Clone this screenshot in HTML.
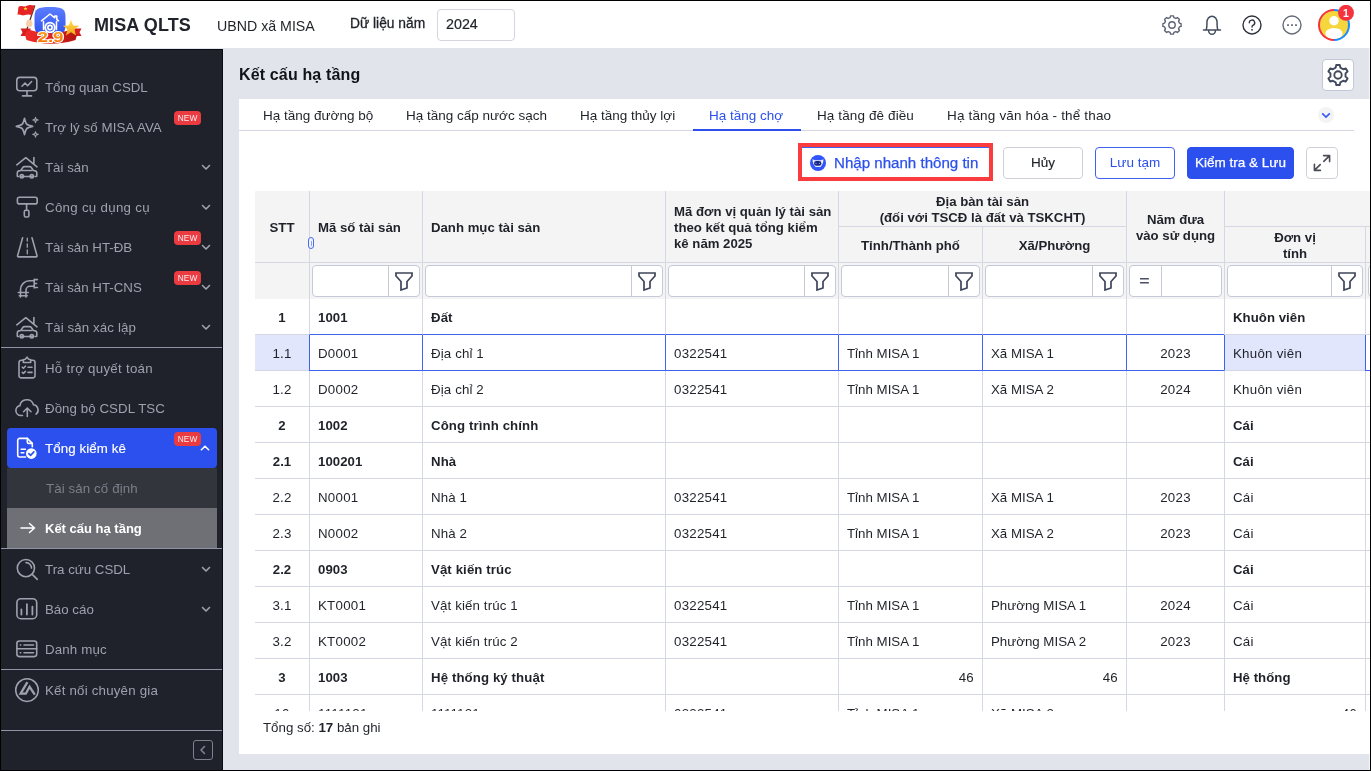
<!DOCTYPE html>
<html lang="vi">
<head>
<meta charset="utf-8">
<title>MISA QLTS - Kết cấu hạ tầng</title>
<style>
*{box-sizing:border-box;margin:0;padding:0}
html,body{width:1371px;height:771px;overflow:hidden;background:#000}
body{font-family:"Liberation Sans",sans-serif;font-size:14px;color:#1f2229;position:relative}
#app{will-change:transform;position:absolute;left:1px;top:1px;width:1369px;height:769px;background:#e1e4ea;overflow:hidden}
/* header */
#hdr{position:absolute;left:0;top:0;width:1369px;height:47px;background:#fff}
#hdr .abs{position:absolute;white-space:nowrap}
#brand{left:93px;top:11px;font-size:18px;font-weight:700;color:#20232b;letter-spacing:.1px;line-height:26px}
#org{left:216px;top:14px;font-size:14.2px;line-height:22px;color:#1f2229}
#ylab{left:349px;top:12px;font-size:13.8px;line-height:22px;color:#1f2229;-webkit-text-stroke:.3px #1f2229}
#year{left:436px;top:8px;width:78px;height:32px;border:1px solid #d3d6de;border-radius:4px;padding-left:8px;line-height:29px;font-size:14.3px;-webkit-text-stroke:.2px #1f2229}
/* sidebar */
#side{position:absolute;left:0;top:48px;width:222px;height:721px;background:#1f222b;border-top:1px solid #090a12;border-right:1px solid #090a12}
.mi{position:absolute;left:6px;width:210px;height:40px;color:#9ea2ae;font-size:13.3px;line-height:40px;white-space:nowrap}
.mi .tx{position:absolute;left:38px;top:1px}
.mi svg.ic{position:absolute;left:8px;top:8px;width:24px;height:24px;overflow:visible;fill:none;stroke:#9ea2ae;stroke-width:1.6;stroke-linecap:round;stroke-linejoin:round}
.mi svg.ch{position:absolute;left:194px;top:15px;width:10px;height:10px;fill:none;stroke:#9ea2ae;stroke-width:1.6;stroke-linecap:round;stroke-linejoin:round}
.new{position:absolute;left:167px;top:4px;width:27px;height:14px;border-radius:4px;background:#ea3b41;color:rgba(255,255,255,.92);font-size:8.3px;line-height:14px;text-align:center;letter-spacing:.1px}
.sep{position:absolute;left:0;width:221px;height:1px;background:#8f93a3}
.mi.act{background:#2b50ed;border-radius:4px;color:#fff}
.mi.act svg.ic,.mi.act svg.ch{stroke:#fff}
.sub{position:absolute;left:6px;width:210px;height:40px;line-height:40px;font-size:13.3px;white-space:nowrap}
/* main */
#title{position:absolute;left:238px;top:62px;font-size:16px;font-weight:700;line-height:24px;color:#111318;letter-spacing:.15px}
#cfg{position:absolute;left:1321px;top:58px;width:32px;height:32px;background:#fff;border:1px solid #c3c8d6;border-radius:4px}
#card{position:absolute;left:238px;top:98px;width:1131px;height:655px;background:#fff}

/* tabs */
#tabs{position:absolute;left:0;top:0;width:1115px;height:32px;border-bottom:1px solid #d5d8e3}
#tabs .tab{position:absolute;top:0;height:32px;line-height:33px;font-size:13.5px;color:#1f2229;white-space:nowrap;padding:0 16px}
#tabs .tab.on{color:#2b50ed;border-bottom:2px solid #2b50ed}
#more{position:absolute;left:1079px;top:8px;width:16px;height:16px;border-radius:8px;background:#f3f3f5}
/* toolbar */
.btn{position:absolute;top:48px;height:32px;border:1px solid #cfd2da;border-radius:4px;background:#fff;font-size:13.5px;line-height:30px;text-align:center;white-space:nowrap;color:#1f2229}
/* grid */
#grid{position:absolute;left:16px;top:92px;width:1115px;height:520px;overflow:hidden}
#grid table{border-collapse:separate;border-spacing:0;table-layout:fixed;width:1210px;font-size:13.3px}
#grid th,#grid td{border-left:1px solid #d5d8e3;border-bottom:1px solid #d5d8e3;overflow:hidden;white-space:nowrap;padding:0 0 0 8px;text-align:left}
#grid tr.h1 th:first-child,#grid td:first-child{border-left:0;text-align:center;padding-left:0;padding-right:0}
#grid thead th{background:#f4f4f5;font-weight:700;font-size:13.2px;line-height:16px;color:#1f2229;vertical-align:middle;white-space:normal;padding-top:3px}
#grid thead th.c{text-align:center;padding:3px 0 0 0}
#grid tr.h1 th{height:36px}
#grid tr.h2 th{height:36px}
#grid tr.f td{height:36px;background:#f4f4f5;padding:0;position:relative;border-bottom:0}
#grid tbody td{height:36px;color:#1f2229;background:#fff;padding-top:1px;letter-spacing:.25px}
#grid tr.g td{font-weight:700;font-size:13.2px;letter-spacing:.05px}
#grid td.n{text-align:center;padding:1px 0 0 0}
#grid td.r{text-align:right;padding:1px 8px 0 0}
.fb{position:absolute;left:2px;top:2px;right:2px;height:32px;border:1px solid #c6cad8;border-radius:4px;background:#fff}
.fb i{position:absolute;top:0;bottom:0;width:1px;background:#c6cad8}
.fb svg{position:absolute;top:5px;width:20px;height:20px;fill:none;stroke:#3f4559;stroke-width:1.7;stroke-linejoin:miter}
#grid tr.sel td{border-left-color:#3f61f0;border-bottom-color:#3f61f0}
#grid tr.pre td.b{border-bottom-color:#3f61f0}
#grid tbody td:nth-child(5),#grid tbody td:nth-child(6){letter-spacing:0}
#grid tbody td:nth-child(3){letter-spacing:.12px}
#grid tr.sel td.hl{background:#e2e6fc;border-bottom-color:#d5d8e3}
#foot{position:absolute;left:24px;top:620px;font-size:13.3px;line-height:18px;color:#1f2229;white-space:nowrap}
</style>
</head>
<body>
<svg width="0" height="0" style="position:absolute"><defs>
<g id="i-car"><path d="M1.8 9.8 10.8 2.7l11.2 9.1M18.9 2.6v5.9"/><g transform="translate(-.2 1.5)"><path d="M2.5 19.5v-3.2c0-1 .6-1.7 1.5-1.9l2-.4 2-3c.4-.6 1-.9 1.7-.9h5.1c.7 0 1.3.3 1.7.9l2 3 2 .4c.9.2 1.5.9 1.5 1.9v3.2c0 .3-.2.5-.5.5h-1.2M6 20h12M3.7 20h-.7c-.3 0-.5-.2-.5-.5"/><circle cx="7" cy="19.8" r="1.7"/><circle cx="17" cy="19.8" r="1.7"/><path d="M7 14h10"/></g></g>
</defs></svg>
<div id="app">
  <div id="hdr">
    <svg class="abs" viewBox="1 1 99 46" style="left:0;top:0;width:99px;height:46px"><defs><linearGradient id="lg1" x1="0" y1="0" x2="0" y2="1"><stop offset="0" stop-color="#5c7dff"/><stop offset="1" stop-color="#2d52ee"/></linearGradient><linearGradient id="lg2" x1="0" y1="0" x2="0" y2="1"><stop offset="0" stop-color="#ffdf4d"/><stop offset="1" stop-color="#f5a21a"/></linearGradient><linearGradient id="lg3" x1="0" y1="0" x2="1" y2="0"><stop offset="0" stop-color="#ef2b2b"/><stop offset=".5" stop-color="#e0201f"/><stop offset="1" stop-color="#b01512"/></linearGradient><linearGradient id="lg4" x1="0" y1="0" x2="0" y2="1"><stop offset="0" stop-color="#ffa51f"/><stop offset="1" stop-color="#f56a00"/></linearGradient></defs>
      <path d="M20.5 28.5h10v7.5h-10l2-3.7zM81.5 28.5h-9v7.5h9l-2-3.7z" fill="#d81f1f"/>
      <path d="M34.5 17c0-8 3-10 15.5-10s15.5 2 15.5 10v8c0 8-3 11-15.5 11s-15.5-3-15.5-11z" fill="url(#lg1)"/>
      <path d="M41.5 20.8 50 14l4.8 3.8v-1.8h2v3.4l1.7 1.4M43.5 21.5v8M56.5 21.5v8" fill="none" stroke="#fff" stroke-width="1.5" stroke-linejoin="round" stroke-linecap="round"/>
      <circle cx="50" cy="27.5" r="5.8" fill="#fff"/><circle cx="50" cy="27.5" r="3.6" fill="none" stroke="#3a5cf0" stroke-width=".9"/><circle cx="50" cy="27.5" r="1.2" fill="#3a5cf0"/>
      <path d="M34.8 5.5 27 29" stroke="#5a2a1c" stroke-width="1.2"/>
      <path d="M18.5 7c3-2.5 5 .5 8-1s5-1 8-.5l-3 9.5c-3-1-5-.5-7.5.3s-4-2-6.5-.3z" fill="#e52424"/>
      <path d="M25.5 6.4 L26.0 7.9 L27.6 7.9 L26.4 8.9 L26.8 10.4 L25.5 9.5 L24.2 10.4 L24.6 8.9 L23.4 7.9 L25.0 7.9Z" fill="#ffd93b"/>
      <ellipse cx="29.3" cy="23.5" rx="3.2" ry="3.8" fill="#f7cfa8"/>
      <path d="M25 35c1-4 3-5.5 7-4.5 12 3.5 24 3.5 36 0 4-1 8 .5 9 4.5l-1.5 5c-17 5-32 5-49 0z" fill="url(#lg3)"/>
      <path d="M71.0 19.9 L73.2 25.5 L79.2 25.8 L74.5 29.6 L76.1 35.5 L71.0 32.2 L65.9 35.5 L67.5 29.6 L62.8 25.8 L68.8 25.5Z" fill="url(#lg2)"/>
      <text transform="translate(50.5 42.3) scale(1.3 1)" x="0" y="0" text-anchor="middle" font-family="Liberation Sans, sans-serif" font-weight="700" font-size="14.5" fill="url(#lg4)" stroke="#fff" stroke-width="2" paint-order="stroke" stroke-linejoin="round">2.9</text>
    </svg>
    <div class="abs" id="brand">MISA QLTS</div>
    <div class="abs" id="org">UBND xã MISA</div>
    <div class="abs" id="ylab">Dữ liệu năm</div>
    <div class="abs" id="year">2024</div>
    <svg class="abs" viewBox="0 0 24 24" style="left:1159px;top:12px;width:24px;height:24px;fill:none;stroke:#5d6373;stroke-width:1.4;stroke-linejoin:round"><path d="M10.56 2.91 L13.44 2.91 L13.90 4.64 L15.86 5.45 L17.41 4.56 L19.44 6.59 L18.55 8.14 L19.36 10.10 L21.09 10.56 L21.09 13.44 L19.36 13.90 L18.55 15.86 L19.44 17.41 L17.41 19.44 L15.86 18.55 L13.90 19.36 L13.44 21.09 L10.56 21.09 L10.10 19.36 L8.14 18.55 L6.59 19.44 L4.56 17.41 L5.45 15.86 L4.64 13.90 L2.91 13.44 L2.91 10.56 L4.64 10.10 L5.45 8.14 L4.56 6.59 L6.59 4.56 L8.14 5.45 L10.10 4.64Z"/><circle cx="12" cy="12" r="3.2"/></svg>
    <svg class="abs" viewBox="0 0 24 24" style="left:1199px;top:12px;width:24px;height:24px;fill:none;stroke:#434c5e;stroke-width:1.5;stroke-linejoin:round;stroke-linecap:round"><path d="M3.5 17h17M6 17c.6-1.2.9-2.8.9-5V9.5a5.1 6.3 0 0 1 10.2 0V12c0 2.2.3 3.8.9 5M8.6 17.4a3.4 3.9 0 0 0 6.8 0"/></svg>
    <svg class="abs" viewBox="0 0 24 24" style="left:1239px;top:12px;width:24px;height:24px;fill:none;stroke:#2e323c;stroke-width:1.4;stroke-linecap:round"><circle cx="12" cy="12" r="9"/><path d="M9.3 9.7a2.7 2.7 0 1 1 4 2.4c-.9.5-1.3 1-1.3 2"/><circle cx="12" cy="16.8" r=".9" fill="#2e323c" stroke="none"/></svg>
    <svg class="abs" viewBox="0 0 24 24" style="left:1279px;top:12px;width:24px;height:24px;fill:none;stroke:#666c7a;stroke-width:1.4"><circle cx="12" cy="12" r="9"/><g fill="#666c7a" stroke="none"><rect x="7.1" y="11.2" width="1.8" height="1.8"/><rect x="11.1" y="11.2" width="1.8" height="1.8"/><rect x="15.1" y="11.2" width="1.8" height="1.8"/></g></svg>
    <svg class="abs" viewBox="0 0 40 40" style="left:1313px;top:4px;width:40px;height:40px"><defs><clipPath id="avc"><circle cx="20" cy="20" r="14"/></clipPath></defs><path d="M20 4a16 16 0 0 0 0 32z" fill="#f5333f"/><path d="M20 4a16 16 0 0 1 0 32z" fill="#1a8cff"/><circle cx="20" cy="20" r="14" fill="#f5d63d"/><g clip-path="url(#avc)" fill="#fff"><circle cx="20" cy="15.7" r="4.7"/><ellipse cx="20" cy="28.5" rx="8.6" ry="5.6"/></g><circle cx="32" cy="7.8" r="8" fill="#f5333f"/><text x="32" y="11.6" text-anchor="middle" font-family="Liberation Sans, sans-serif" font-weight="700" font-size="10.5" fill="#fff">1</text></svg>
  </div>
  <div id="side">
    <div class="mi" style="top:17px"><svg class="ic" viewBox="0 0 24 24"><rect x="1.8" y="2.4" width="20" height="13.4" rx="3"/><path d="M7.5 20.9h9M12 15.8v5.1M7 11.2l3-3.2 2.6 2.7 4-4.2"/></svg><span class="tx">Tổng quan CSDL</span></div>
    <div class="mi" style="top:57px"><svg class="ic" viewBox="0 0 24 24"><path d="M9.5 3.2C10.98 9.63 11.27 9.92 17.7 11.4C11.27 12.88 10.98 13.17 9.5 19.6C8.02 13.17 7.73 12.88 1.3 11.4C7.73 9.92 8.02 9.63 9.5 3.2z"/><path d="M20.5 2.3C20.99 4.42 21.08 4.51 23.2 5C21.08 5.49 20.99 5.58 20.5 7.7C20.01 5.58 19.92 5.49 17.8 5C19.92 4.51 20.01 4.42 20.5 2.3zM20.5 16.7C20.99 18.82 21.08 18.91 23.2 19.4C21.08 19.89 20.99 19.98 20.5 22.1C20.01 19.98 19.92 19.89 17.8 19.4C19.92 18.91 20.01 18.82 20.5 16.7z" stroke-width="1.1"/></svg><span class="tx" style="letter-spacing:0.11px">Trợ lý số MISA AVA</span><span class="new">NEW</span></div>
    <div class="mi" style="top:97px"><svg class="ic" viewBox="0 0 24 24"><use href="#i-car"/></svg><span class="tx">Tài sản</span><svg class="ch" viewBox="0 0 10 10"><path d="M1.5 3.5 5 7l3.5-3.5"/></svg></div>
    <div class="mi" style="top:137px"><svg class="ic" viewBox="0 0 24 24"><rect x="2.4" y="2.2" width="19.8" height="6.7" rx="2"/><path d="M11.6 8.9v6.4"/><rect x="9.3" y="15.3" width="4.6" height="6.7" rx="1.5"/></svg><span class="tx" style="letter-spacing:0.29px">Công cụ dụng cụ</span><svg class="ch" viewBox="0 0 10 10"><path d="M1.5 3.5 5 7l3.5-3.5"/></svg></div>
    <div class="mi" style="top:177px"><svg class="ic" viewBox="0 0 24 24"><path d="M7.6 2.7 2.6 20.6c-.2.7.2 1.3.9 1.3h17.6c.7 0 1.1-.6.9-1.3L17 2.7"/><path d="M12.3 3.2v2.8M12.3 8.8v3.4M12.3 15v3.8" stroke-width="1.3"/></svg><span class="tx">Tài sản HT-ĐB</span><span class="new">NEW</span><svg class="ch" viewBox="0 0 10 10"><path d="M1.5 3.5 5 7l3.5-3.5"/></svg></div>
    <div class="mi" style="top:217px"><svg class="ic" viewBox="0 0 24 24"><path d="M5.5 17.5v-2.7a9 9 0 0 1 9-9h4.6M11 17.5v-2.2a4 4 0 0 1 4-4h4.1M19.2 4.2v8.7M19.2 4.6h3.2M19.2 12.5h3.2M19.2 8.5h2.4M3.3 17.5h9.9M5.5 17.5v4.6M11 17.5v4.6M4.3 20.8h8"/></svg><span class="tx">Tài sản HT-CNS</span><span class="new">NEW</span><svg class="ch" viewBox="0 0 10 10"><path d="M1.5 3.5 5 7l3.5-3.5"/></svg></div>
    <div class="mi" style="top:257px"><svg class="ic" viewBox="0 0 24 24"><use href="#i-car"/></svg><span class="tx" style="letter-spacing:0.1px">Tài sản xác lập</span><svg class="ch" viewBox="0 0 10 10"><path d="M1.5 3.5 5 7l3.5-3.5"/></svg></div>
    <div class="sep" style="top:297px"></div>
    <div class="mi" style="top:298px"><svg class="ic" viewBox="0 0 24 24"><path d="M8.3 4.2H6.2A2.2 2.2 0 0 0 4 6.4v13.3a2.2 2.2 0 0 0 2.2 2.2h11.6a2.2 2.2 0 0 0 2.2-2.2V6.4a2.2 2.2 0 0 0-2.2-2.2h-2.1"/><path d="M8.3 6.5V3.8l2-.6L12 1.2l1.7 2 2 .6v2.7z"/><path d="M7.3 11.2l1.1 1.1 2-2.1M13 11.2h4M7.3 16.4l1.1 1.1 2-2.1M13 16.4h4"/></svg><span class="tx" style="letter-spacing:0.27px">Hỗ trợ quyết toán</span></div>
    <div class="mi" style="top:338px"><svg class="ic" viewBox="0 0 24 24"><path d="M7.5 19.5H5.8a5 5 0 0 1-.9-9.9 7 7 0 0 1 13.6-.8 5.3 5.3 0 0 1 2.6 9.4"/><path d="M12.3 20.5v-8.3M8.6 15.7l3.7-3.7 3.7 3.7"/></svg><span class="tx" style="letter-spacing:0.06px">Đồng bộ CSDL TSC</span></div>
    <div class="mi act" style="top:378px"><svg class="ic" viewBox="0 0 24 24"><path d="M10.5 21H4.7a2 2 0 0 1-2-2V4.4a2 2 0 0 1 2-2h7.6l5 5v3.4"/><path d="M12.3 2.4v3.6a1.4 1.4 0 0 0 1.4 1.4h3.6M6.2 13.3h4.2M6.2 16.8h2.6"/><circle cx="16.3" cy="17.6" r="5.3" fill="#fff" stroke="none"/><path d="M13.8 17.6l1.8 1.8 3.3-3.5" stroke="#2b50ed" stroke-width="1.6"/></svg><span class="tx" style="letter-spacing:.1px;-webkit-text-stroke:.15px #fff">Tổng kiểm kê</span><span class="new">NEW</span><svg class="ch" viewBox="0 0 10 10" style="left:193px;top:15px"><path d="M1.4 6.7 5 3.2l3.6 3.5" stroke-width="1.6"/></svg></div>
    <div class="sub" style="top:418px;background:#33353d;color:#7c7f8a"><span style="position:absolute;left:39px;top:1px;letter-spacing:.1px">Tài sản cố định</span></div>
    <div class="sub" style="top:458px;background:#6e7076;color:#fff;font-weight:700"><svg viewBox="0 0 16 12" style="position:absolute;left:13px;top:14px;width:16px;height:12px;fill:none;stroke:#fff;stroke-width:1.5;stroke-linecap:round;stroke-linejoin:round"><path d="M1 6h13.5M9.5 1.5 14.5 6l-5 4.5"/></svg><span style="position:absolute;left:38px;top:1px;font-size:13px">Kết cấu hạ tầng</span></div>
    <div class="sep" style="top:498px"></div>
    <div class="mi" style="top:499px"><svg class="ic" viewBox="0 0 24 24"><circle cx="10.9" cy="11.1" r="8.6"/><path d="M17.2 17.4l5.1 4.9M11 5.6a5.5 5.5 0 0 1 5.5 5.5"/></svg><span class="tx">Tra cứu CSDL</span><svg class="ch" viewBox="0 0 10 10"><path d="M1.5 3.5 5 7l3.5-3.5"/></svg></div>
    <div class="mi" style="top:539px"><svg class="ic" viewBox="0 0 24 24"><rect x="1.9" y="1.7" width="19.8" height="20" rx="4"/><path d="M6.4 17.5v-5M11.9 17.5V7.2M17.4 17.5V9.7" stroke-width="1.8"/></svg><span class="tx">Báo cáo</span><svg class="ch" viewBox="0 0 10 10"><path d="M1.5 3.5 5 7l3.5-3.5"/></svg></div>
    <div class="mi" style="top:579px"><svg class="ic" viewBox="0 0 24 24"><rect x="1.9" y="4" width="19.8" height="15.6" rx="2.5"/><path d="M1.9 11.8h19.8M9 8h9.5M9 15.7h9.5M5.3 8h.4M5.3 15.7h.4"/></svg><span class="tx" style="letter-spacing:0.15px">Danh mục</span></div>
    <div class="sep" style="top:619px"></div>
    <div class="mi" style="top:620px"><svg class="ic" viewBox="0 0 24 24"><circle cx="12" cy="12.1" r="11.3" stroke-width="1.5"/><path d="M19.8 16.6 14.6 8.8 10.8 15.7H5.6L12.4 4.2" stroke-width="2.3" stroke-linecap="butt" stroke-linejoin="miter"/></svg><span class="tx" style="letter-spacing:0.2px">Kết nối chuyên gia</span></div>
    <div class="sep" style="top:680px"></div>
    <div style="position:absolute;left:192px;top:690px;width:20px;height:20px;border:1.5px solid #7d818e;border-radius:3px"><svg viewBox="0 0 10 10" style="position:absolute;left:3.5px;top:3.5px;width:10px;height:10px;fill:none;stroke:#7d818e;stroke-width:1.6;stroke-linecap:round;stroke-linejoin:round"><path d="M6.5 1.5 3 5l3.5 3.5"/></svg></div>
  </div>
  <div style="position:absolute;left:1368px;top:47px;width:1px;height:722px;background:#f4f5f8"></div>
  <div id="title">Kết cấu hạ tầng</div>
  <div id="cfg"><svg viewBox="0 0 24 24" style="position:absolute;left:3px;top:3px;width:24px;height:24px;fill:none;stroke:#424a5e;stroke-width:1.9;stroke-linejoin:round"><path d="M10.23 1.95 L13.77 1.95 L14.38 4.68 L17.15 6.28 L19.81 5.44 L21.58 8.51 L19.53 10.40 L19.53 13.60 L21.58 15.49 L19.81 18.56 L17.15 17.72 L14.38 19.32 L13.77 22.05 L10.23 22.05 L9.62 19.32 L6.85 17.72 L4.19 18.56 L2.42 15.49 L4.47 13.60 L4.47 10.40 L2.42 8.51 L4.19 5.44 L6.85 6.28 L9.62 4.68Z"/><circle cx="12" cy="12" r="3.7"/></svg></div>
  <div id="card">
    <div id="tabs"><div class="tab" style="left:8px">Hạ tầng đường bộ</div><div class="tab" style="left:151px">Hạ tầng cấp nước sạch</div><div class="tab" style="left:325px">Hạ tầng thủy lợi</div><div class="tab on" style="left:454px;width:108px">Hạ tầng chợ</div><div class="tab" style="left:562px;letter-spacing:.11px">Hạ tầng đê điều</div><div class="tab" style="left:692px;letter-spacing:.17px">Hạ tầng văn hóa - thể thao</div><div id="more"><svg viewBox="0 0 16 16" style="position:absolute;left:0;top:0;width:16px;height:16px;fill:none;stroke:#3b5cf3;stroke-width:1.7;stroke-linejoin:miter"><path d="M4.2 6.3 8 10.1l3.800-3.800"/></svg></div></div>
    <div id="quick" style="position:absolute;left:559px;top:44px;width:195px;height:38px;border:4px solid #fa3c3e"><div style="position:absolute;left:0;top:0;right:0;height:1px;background:#3f61f0"></div><svg viewBox="0 0 16 16" style="position:absolute;left:8px;top:8px;width:16px;height:16px"><circle cx="8" cy="8" r="8" fill="#3155fa"/><path d="M2.6 4.2 5 5.2h6l2.4-1c.2 2.8-.9 5.8-2.9 7.7H5.5C3.5 10 2.4 7 2.6 4.2z" fill="#eaf0ff"/><rect x="4" y="6" width="7.4" height="4.8" rx="2.4" fill="#1a2586"/><circle cx="6" cy="8.4" r=".6" fill="#8fa0e0"/><circle cx="9.4" cy="8.4" r=".6" fill="#8fa0e0"/></svg><span style="position:absolute;left:32px;top:1px;line-height:30px;font-size:15.1px;color:#2b50ed;white-space:nowrap;-webkit-text-stroke:.25px #2b50ed">Nhập nhanh thông tin</span></div>
    <div class="btn" style="left:764px;width:80px;-webkit-text-stroke:.15px #1f2229">Hủy</div>
    <div class="btn" style="left:856px;width:80px;border-color:#3f61f0;color:#2b50ed">Lưu tạm</div>
    <div class="btn" style="left:948px;width:107px;border-color:#2b50ed;background:#2b50ed;color:#fff;-webkit-text-stroke:.25px #fff">Kiểm tra &amp; Lưu</div>
    <div class="btn" style="left:1067px;width:32px"><svg viewBox="0 0 20 20" style="position:absolute;left:5px;top:5px;width:20px;height:20px;fill:none;stroke:#4b4d55;stroke-width:1.6;stroke-linecap:round;stroke-linejoin:round"><path d="M11.6 2.6h6v6M17.6 2.6 11.8 8.4M8.4 17.4h-6v-6M2.4 17.4 8.2 11.6"/></svg></div>
    <div id="grid"><table>
      <colgroup><col style="width:54px"><col style="width:113px"><col style="width:243px"><col style="width:173px"><col style="width:144px"><col style="width:144px"><col style="width:98px"><col style="width:141px"><col style="width:100px"></colgroup>
      <thead>
      <tr class="h1"><th rowspan="2">STT</th><th rowspan="2" style="position:relative">Mã số tài sản</th><th rowspan="2">Danh mục tài sản</th><th rowspan="2">Mã đơn vị quản lý tài sản<br>theo kết quả tổng kiểm<br>kê năm 2025</th><th colspan="2" class="c">Địa bàn tài sản<br>(đối với TSCĐ là đất và TSKCHT)</th><th rowspan="2" class="c">Năm đưa<br>vào sử dụng</th><th colspan="2"></th></tr>
      <tr class="h2"><th class="c">Tỉnh/Thành phố</th><th class="c">Xã/Phường</th><th class="c" style="vertical-align:bottom;padding:0">Đơn vị<br>tính</th><th></th></tr>
      </thead>
      <tbody>
      <tr class="f"><td></td><td><div class="fb"><i style="right:30px"></i><svg viewBox="0 0 20 20" style="right:5px"><path d="M2 2h16v3l-5 5.5v6.5l-6 2v-8.5l-5-5.5z"/></svg></div></td><td><div class="fb"><i style="right:30px"></i><svg viewBox="0 0 20 20" style="right:5px"><path d="M2 2h16v3l-5 5.5v6.5l-6 2v-8.5l-5-5.5z"/></svg></div></td><td><div class="fb"><i style="right:30px"></i><svg viewBox="0 0 20 20" style="right:5px"><path d="M2 2h16v3l-5 5.5v6.5l-6 2v-8.5l-5-5.5z"/></svg></div></td><td><div class="fb"><i style="right:30px"></i><svg viewBox="0 0 20 20" style="right:5px"><path d="M2 2h16v3l-5 5.5v6.5l-6 2v-8.5l-5-5.5z"/></svg></div></td><td><div class="fb"><i style="right:30px"></i><svg viewBox="0 0 20 20" style="right:5px"><path d="M2 2h16v3l-5 5.5v6.5l-6 2v-8.5l-5-5.5z"/></svg></div></td><td><div class="fb"><i style="left:31px"></i><span style="position:absolute;left:10px;top:6px;font-size:15px;font-weight:700;line-height:18px;color:#4a5168;transform:scaleX(1.18)">=</span></div></td><td><div class="fb"><i style="right:30px"></i><svg viewBox="0 0 20 20" style="right:5px"><path d="M2 2h16v3l-5 5.5v6.5l-6 2v-8.5l-5-5.5z"/></svg></div></td><td><div class="fb"><i style="right:30px"></i><svg viewBox="0 0 20 20" style="right:5px"><path d="M2 2h16v3l-5 5.5v6.5l-6 2v-8.5l-5-5.5z"/></svg></div></td></tr>
      <tr class="g pre"><td>1</td><td class="b">1001</td><td class="b">Đất</td><td class="b"></td><td class="b"></td><td class="b"></td><td class="b"></td><td>Khuôn viên</td><td></td></tr>
      <tr class="sel"><td class="hl">1.1</td><td>D0001</td><td>Địa chỉ 1</td><td>0322541</td><td>Tỉnh MISA 1</td><td>Xã MISA 1</td><td class="n">2023</td><td class="hl">Khuôn viên</td><td></td></tr>
      <tr><td>1.2</td><td>D0002</td><td>Địa chỉ 2</td><td>0322541</td><td>Tỉnh MISA 1</td><td>Xã MISA 2</td><td class="n">2024</td><td>Khuôn viên</td><td></td></tr>
      <tr class="g"><td>2</td><td>1002</td><td>Công trình chính</td><td></td><td></td><td></td><td class="n"></td><td>Cái</td><td></td></tr>
      <tr class="g"><td>2.1</td><td>100201</td><td>Nhà</td><td></td><td></td><td></td><td class="n"></td><td>Cái</td><td></td></tr>
      <tr><td>2.2</td><td>N0001</td><td>Nhà 1</td><td>0322541</td><td>Tỉnh MISA 1</td><td>Xã MISA 1</td><td class="n">2023</td><td>Cái</td><td></td></tr>
      <tr><td>2.3</td><td>N0002</td><td>Nhà 2</td><td>0322541</td><td>Tỉnh MISA 1</td><td>Xã MISA 2</td><td class="n">2023</td><td>Cái</td><td></td></tr>
      <tr class="g"><td>2.2</td><td>0903</td><td>Vật kiến trúc</td><td></td><td></td><td></td><td class="n"></td><td>Cái</td><td></td></tr>
      <tr><td>3.1</td><td>KT0001</td><td>Vật kiến trúc 1</td><td>0322541</td><td>Tỉnh MISA 1</td><td>Phường MISA 1</td><td class="n">2024</td><td>Cái</td><td></td></tr>
      <tr><td>3.2</td><td>KT0002</td><td>Vật kiến trúc 2</td><td>0322541</td><td>Tỉnh MISA 1</td><td>Phường MISA 2</td><td class="n">2023</td><td>Cái</td><td></td></tr>
      <tr class="g"><td>3</td><td>1003</td><td>Hệ thống ký thuật</td><td></td><td class="r" style="font-weight:400;font-size:13.3px;letter-spacing:.25px">46</td><td class="r" style="font-weight:400;font-size:13.3px;letter-spacing:.25px">46</td><td class="n"></td><td>Hệ thống</td><td></td></tr>
      <tr><td>10</td><td>1111121</td><td>1111121</td><td>0322541</td><td>Tỉnh MISA 1</td><td>Xã MISA 2</td><td class="n"></td><td class="r">46</td><td></td></tr>
      </tbody>
    </table><div style="position:absolute;left:53px;top:46px;width:6px;height:12px;border:1px solid #4a6af0;border-radius:3px;background:#f0f3ff"><div style="position:absolute;left:1.5px;top:3px;width:1px;height:5px;background:#8ea2f5"></div></div></div>
    <div id="foot">Tổng số: <b>17</b> bản ghi</div>
  </div>
</div>
</body>
</html>
